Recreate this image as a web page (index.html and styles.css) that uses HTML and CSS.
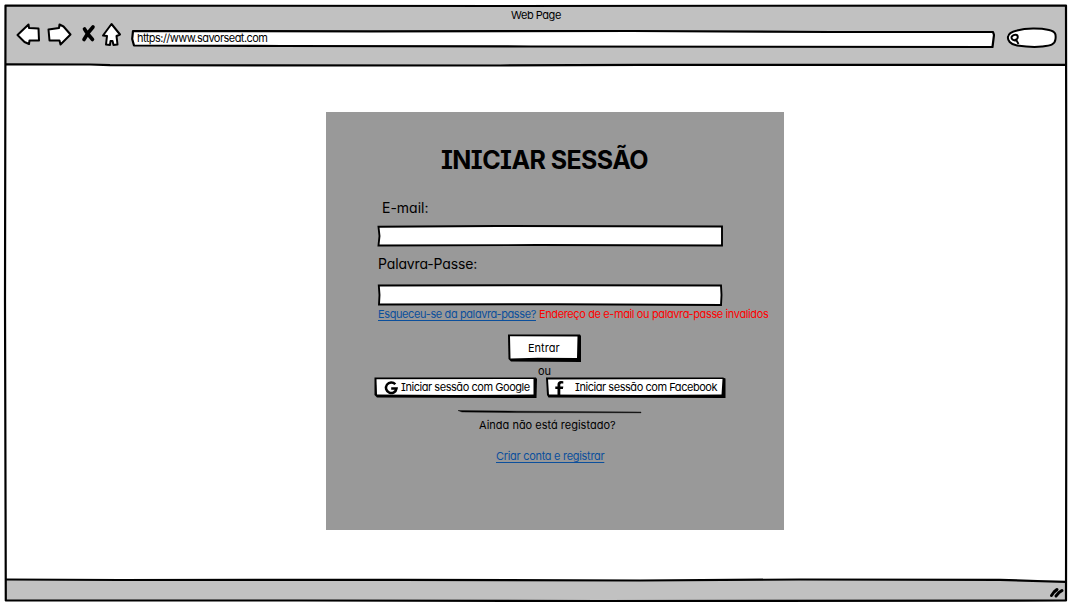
FILE: index.html
```html
<!DOCTYPE html>
<html lang="pt">
<head>
<meta charset="utf-8">
<title>Web Page</title>
<link rel="stylesheet" href="styles.css">
</head>
<body>
<div class="window">
  <svg class="frame" viewBox="0 0 1077 605" fill="none" stroke="#000" stroke-width="2.2" stroke-linecap="round" stroke-linejoin="round">
    <path d="M5.500 5.500L500 6L1066 5.500L1066.500 300L1066 600.500L600 601L300 600.500L5.800 600.500L5 300Z"/>
    <path d="M6 64.300L90 64.500L110 65.200L500 65.500L640 64.800L1066 64.800"/>
    <path d="M6 579.500L120 580L400 579.800L640 580.500L800 579.500L1000 579.800L1066 582"/>
    <path d="M1051.500 595.500L1054 592L1057 589.500M1056 596L1059 592.500L1062 590.500" stroke-width="3"/>
  </svg>
  <header class="toolbar">
    <div class="page-title"><span class="t-title">Web Page</span></div>
    <div class="controls">
      <svg class="nav-icons" viewBox="0 0 110 28" fill="#fff" stroke="#000" stroke-width="2" stroke-linejoin="round" stroke-linecap="round">
        <path d="M1.500 14L12.500 3.500L13 7L22.500 7.500L23 19.500L13.500 19.500L13 23L8.500 21Z"/>
        <path d="M32.500 8.500L43 7L43.500 3.500L47.500 5.500L54.500 13.500L44.500 23.500L43.500 19.500L33.500 19.500Z"/>
        <path d="M68.500 8L71 12L76.500 18.500M77 6L72 12L68 18.500" stroke-width="3.600"/>
        <path d="M95.500 3L104 13.500L100.500 15L101.500 23.500L97.500 24L96.500 20L94.500 20L94 24L90 23.500L91 15L87 14.500Z"/>
      </svg>
      <div class="address">
        <svg class="sketch" viewBox="0 0 864 20" fill="#fff" stroke="#000" stroke-width="2.200" stroke-linejoin="round"><path d="M2 2L240 2.300L500 2L700 3L862 3L863 6L861.500 18L400 17.500L150 17L3 16.500L1.200 10Z"/></svg>
        <span class="t-url">https://www.savorseat.com</span>
      </div>
      <svg class="search" viewBox="0 0 52 24" fill="#fff" stroke="#000" stroke-width="2"><path d="M11 4.500C20 2 34 2 43 4C50 5.500 50 9 49.500 13C49 19 44 19.500 36 20.500C27 21.500 18 20.500 11 19.500C4 18.500 1.500 14 2 11C2.500 7 6 5.500 11 4.500Z"/><path d="M11 14C7 15.500 4.800 12.500 5.800 10.500C8 8 11.800 8 11.800 11C11.800 12.500 10.500 14 8.500 14M10 13.500L12.500 18" stroke-width="1.900" fill="none"/></svg>
    </div>
  </header>
  <main class="content">
    <form class="panel">
      <h1><span class="t-heading">INICIAR SESSÃO</span></h1>
      <label class="email-label"><span class="t-email">E-mail:</span></label>
      <div class="field"><svg class="sketch" viewBox="0 0 346 22" fill="#fff" stroke="#000" stroke-width="1.900"><path d="M1.500 1.800L120 1L345 1.500L345 20.500L160 20L1.500 20.500L2.500 11Z"/></svg></div>
      <label class="password-label"><span class="t-password">Palavra-Passe:</span></label>
      <div class="field"><svg class="sketch" viewBox="0 0 346 22" fill="#fff" stroke="#000" stroke-width="1.900"><path d="M1.800 1.500L180 1.200L344 1.500L344.500 11L344 21L180 20.200L2 20.500L2.500 11Z"/></svg></div>
      <div class="messages"><a class="t-forgot">Esqueceu-se da palavra-passe?</a><span class="t-error">Endereço de e-mail ou palavra-passe invalidos</span></div>
      <div class="enter">
        <svg class="sketch" viewBox="0 0 74 29"><path d="M0 .5L72 .5L73 2L73 28L3 27.500L.5 25Z"/><path d="M2 2.300L69.500 2.500L69 24L30 23.800L2.500 24.500Z" fill="#fff"/></svg>
        <span class="t-enter">Entrar</span>
      </div>
      <div class="or"><span class="t-or">ou</span></div>
      <div class="social">
        <div class="google">
          <svg class="sketch" viewBox="0 0 164 22"><path d="M.5 .5L162 .5L163 2L162.500 21L3 20.500L.5 18Z"/><path d="M2.500 2.300L159.500 2L159.500 17.500L80 18L3 17.500Z" fill="#fff"/></svg>
          <svg class="google-icon" viewBox="0 0 14 14" fill="none" stroke="#000" stroke-width="2.500"><path d="M11.300 3.300A5.300 5.300 0 1 0 12.500 7.500H7.200"/></svg>
          <span class="t-google">Iniciar sessão com Google</span>
        </div>
        <div class="facebook">
          <svg class="sketch" viewBox="0 0 181 22"><path d="M0 .5L177 .5L179.500 1.500L179.500 21L2.500 20.500L1 18Z"/><path d="M2 2.500L176.500 2L175.500 17.500L90 18L3 17.500Z" fill="#fff"/></svg>
          <svg class="facebook-icon" viewBox="0 0 9 14"><path d="M2.500 14V8H.3V5.400H2.500V3.600C2.500 1.200 3.900 0 6 0L8.300 .2V2.500H6.700C5.600 2.500 5.300 3.100 5.300 3.900V5.400H8.300L7.900 8H5.300V14Z"/></svg>
          <span class="t-facebook">Iniciar sessão com Facebook</span>
        </div>
      </div>
      <svg class="divider" viewBox="0 0 186 4"><path d="M1 .5L60 1.200L184 2L184 2.800L60 2.600L5 2Z" stroke="#000" stroke-width=".4"/></svg>
      <p class="question"><span class="t-question">Ainda não está registado?</span></p>
      <p class="register"><a class="t-register">Criar conta e registrar</a></p>
    </form>
  </main>
  <footer class="status"></footer>
</div>
</body>
</html>
```
FILE: styles.css
```css
* { box-sizing: border-box; }
body { margin: 0; width: 1077px; height: 605px; background: #fff; overflow: hidden; color: #000;
  font: 11px/16px Inter, "Noto Sans", sans-serif; font-feature-settings: "cv11", "cv08"; white-space: nowrap; }
h1, p { margin: 0; }
svg { display: block; }
.window { position: relative; height: 605px; padding: 5px 10px 4px 5px; display: flex; flex-direction: column; }
.frame { position: absolute; inset: 0; width: 1077px; height: 605px; z-index: 2; pointer-events: none; }
.toolbar { height: 60px; background: #c1c1c1; padding-top: 2px; }
.page-title { display: flex; justify-content: center; height: 16px; }
.t-title { letter-spacing: -.45px; }
.controls { display: flex; align-items: flex-start; padding-left: 11px; }
.nav-icons { width: 110px; height: 28px; margin-right: 5px; margin-top: -2px; }
.address { position: relative; width: 864px; height: 20px; margin-top: 6px; padding: 1px 0 0 6px; }
.t-url { letter-spacing: -.54px; }
.search { width: 52px; height: 24px; margin: 3px 0 0 11px; }
.sketch { position: absolute; inset: 0; width: 100%; height: 100%; }
.sketch ~ span { position: relative; }
.content { height: 515px; padding: 47px 0 0 321px; }
.panel { width: 458px; height: 418px; background: #999; padding: 33px 0 0 52px; }
h1 { font-size: 25px; line-height: 30px; font-weight: 700; padding-left: 63px; letter-spacing: -.58px; }
label { display: block; font-size: 14px; line-height: 20px; }
.email-label { margin: 23px 0 0 4px; }
.field { position: relative; width: 346px; height: 22px; margin-left: -1px; }
.email-label + .field { margin-top: 7px; }
.password-label { margin-top: 7px; letter-spacing: -.15px; }
.password-label + .field { margin-top: 10px; }
.messages { display: flex; gap: 3px; height: 16px; }
a { color: #0b4f9c; text-decoration: underline; text-underline-offset: 2px; text-decoration-thickness: 1px; }
.t-forgot { letter-spacing: -.39px; }
.t-error { color: #f00; letter-spacing: -.38px; }
.enter { position: relative; width: 74px; height: 29px; margin: 12px 0 0 130px; padding: 6px 0 0 20px; }
.or { margin: 0 0 0 160px; height: 14px; }
.social { display: flex; gap: 8px; margin: 0 0 0 -4px; }
.google, .facebook { position: relative; height: 22px; display: flex; padding-top: 2px; }
.google { width: 164px; padding-left: 10px; }
.facebook { width: 181px; padding-left: 9px; }
.google-icon { position: relative; width: 14px; height: 14px; margin: 2px 3px 0 0; }
.facebook-icon { position: relative; width: 9px; height: 14px; margin: 2px 11px 0 0; }
.t-google, .t-facebook { letter-spacing: -.45px; }
.divider { width: 186px; height: 4px; margin: 11px 0 0 79px; }
.question { margin: 3px 0 0 101px; }
.register { margin: 15px 0 0 118px; }
.t-register { letter-spacing: -.3px; }
.status { height: 21px; background: #c1c1c1; }
```
